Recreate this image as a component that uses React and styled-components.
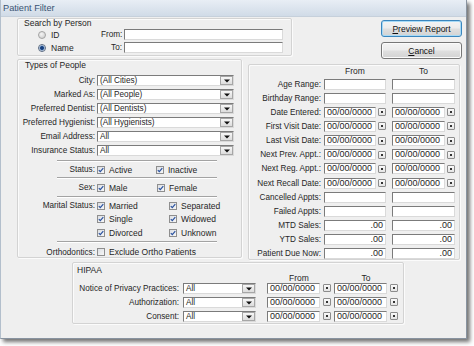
import React from "react";
import styled, { createGlobalStyle } from "styled-components";

const GlobalStyle = createGlobalStyle`
  html, body { margin: 0; padding: 0; background: #ffffff; }
  body {
    font-family: "Liberation Sans", Arial, sans-serif;
    font-size: 8.2px;
    color: #262626;
  }
  * { box-sizing: border-box; }
`;

const Stage = styled.div`
  width: 474px;
  height: 346px;
  overflow: hidden;
  background: #fff;
`;

const Window = styled.div`
  width: 467px;
  height: 339px;
  display: flex;
  flex-direction: column;
  background: #efefef;
  border-left: 1px solid #b3bfcc;
  border-right: 1px solid #8893a0;
  border-bottom: 1px solid #8893a0;
  box-shadow: 3px 3px 4px rgba(0, 0, 0, 0.55);
`;

const TitleBar = styled.div`
  height: 17px;
  flex-shrink: 0;
  display: flex;
  align-items: center;
  padding-left: 2px;
  font-size: 9.2px;
  color: #3a5373;
  background: linear-gradient(#e8eef5, #d0dbe7);
  border-bottom: 1px solid #c6d0db;
`;

const Body = styled.div`
  flex: 1;
  display: flex;
  flex-direction: column;
  align-items: flex-start;
  padding: 1px 0 0 16px;
`;

const Row = styled.div`
  display: flex;
  align-items: flex-start;
`;

const Group = styled.div`
  flex-shrink: 0;
  width: ${(p) => p.$w}px;
  height: ${(p) => p.$h}px;
  margin: ${(p) => p.$m || "0"};
  border: 1px solid #d3d3d3;
  border-radius: 2px;
  box-shadow: inset 1px 1px 0 #fbfbfb, 1px 1px 0 #fbfbfb;
`;

const GroupTitle = styled.div`
  line-height: ${(p) => p.$lh}px;
  height: ${(p) => p.$lh}px;
  margin-top: ${(p) => p.$mt || 0}px;
  padding-left: ${(p) => p.$pl}px;
  font-size: 8.5px;
  white-space: nowrap;
`;

const ButtonCol = styled.div`
  display: flex;
  flex-direction: column;
  gap: 5px;
  margin: 2px 0 0 89px;
`;

const Button = styled.button`
  width: 81px;
  height: 17px;
  padding: 0;
  font-family: inherit;
  font-size: 8.5px;
  color: #111;
  border: 1px solid ${(p) => (p.$default ? "#3a86be" : "#777")};
  border-radius: 3px;
  background: linear-gradient(#f4f4f4 0%, #ececec 48%, #dfdfdf 52%, #d3d3d3 100%);
  box-shadow: inset 0 0 0 1px ${(p) => (p.$default ? "#a7daf6" : "#fbfbfb")};
  u { text-decoration: underline; }
`;

const SearchGrid = styled.div`
  display: grid;
  grid-template-columns: 61px 21px 159px;
  column-gap: 2px;
  grid-auto-rows: 13px;
  align-items: center;
  padding-left: 20px;
`;

const RadioLabel = styled.label`
  display: flex;
  align-items: center;
  gap: 5px;
  white-space: nowrap;
  font-size: 8.5px;
`;

const Radio = styled.span`
  width: 8px;
  height: 8px;
  border-radius: 50%;
  border: 1px solid ${(p) => (p.$on ? "#5a6a80" : "#a3a3a3")};
  background: ${(p) =>
    p.$on
      ? "radial-gradient(circle, #17407f 0 1.5px, #6d94c8 2.1px, #e6edf5 3px)"
      : "radial-gradient(circle at 40% 35%, #f4f4f4, #c9c9c9)"};
`;

const FieldLabel = styled.span`
  text-align: right;
  white-space: nowrap;
  padding-right: ${(p) => p.$pr || 0}px;
`;

const TextBox = styled.div`
  width: ${(p) => p.$w}px;
  height: 11px;
  display: flex;
  align-items: center;
  justify-content: ${(p) => (p.$right ? "flex-end" : "flex-start")};
  padding: ${(p) => (p.$select ? "0 0 0 2px" : "0 2px")};
  font-size: ${(p) => (p.$digits ? "9px" : "inherit")};
  background: #fff;
  border-top: 1px solid #7b7b7b;
  border-left: 1px solid #7b7b7b;
  border-right: 1px solid #dadada;
  border-bottom: 1px solid #dadada;
  line-height: 9px;
  white-space: nowrap;
  overflow: hidden;
`;

const DropBtn = styled.span`
  margin-left: auto;
  width: 13px;
  height: 9px;
  flex-shrink: 0;
  display: flex;
  align-items: flex-end;
  justify-content: center;
  padding-bottom: 1px;
  border: 1px solid #a6a6a6;
  background: linear-gradient(#f7f7f7, #dcdcdc);
`;

const DateBtn = styled.span`
  width: 8px;
  height: 8px;
  margin-left: ${(p) => p.$gap}px;
  flex-shrink: 0;
  display: flex;
  align-items: center;
  justify-content: center;
  border: 1px solid #8c8c8c;
  border-radius: 1px;
  background: linear-gradient(#fafafa, #e4e4e4);
  &::after {
    content: "";
    width: 2px;
    height: 2px;
    background: #333;
  }
`;

const DateCell = styled.div`
  display: flex;
  align-items: center;
`;

const FormList = styled.div`
  margin-top: ${(p) => p.$mt || 0}px;
`;

const FormRow = styled.div`
  display: grid;
  grid-template-columns: 74px 137px;
  column-gap: 2px;
  align-items: center;
  height: 14px;
  padding-left: 3px;
`;

const Divider = styled.div`
  width: 160px;
  height: 2px;
  margin: ${(p) => p.$mt}px 0 0 39px;
  border-top: 1px solid #a3a3a3;
  border-bottom: 1px solid #ffffff;
`;

const CheckRow = styled.div`
  display: grid;
  grid-template-columns: 74px ${(p) => p.$first}px auto;
  column-gap: 2px;
  align-items: center;
  height: ${(p) => p.$h}px;
  margin-top: ${(p) => p.$mt || 0}px;
  padding-left: 3px;
`;

const CheckItem = styled.label`
  display: flex;
  align-items: center;
  gap: 4px;
  white-space: nowrap;
  font-size: 8.5px;
`;

const Box = styled.span`
  width: 8px;
  height: 8px;
  flex-shrink: 0;
  display: flex;
  align-items: center;
  justify-content: center;
  border: 1px solid #8e8e8e;
  background: linear-gradient(135deg, #dcdfe4, #f7f7f7);
`;

const MaritalBlock = styled.div`
  padding-top: 1px;
`;

const DatesGrid = styled.div`
  display: grid;
  grid-template-columns: 75px 68px 63px;
  grid-template-rows: 12px;
  grid-auto-rows: 14.15px;
  align-items: center;
`;

const HeadCell = styled.div`
  grid-column: ${(p) => p.$col};
  text-align: center;
  padding-right: ${(p) => p.$pr || 0}px;
  line-height: 8px;
  font-size: 8.5px;
`;

const HipaaGrid = styled.div`
  display: grid;
  grid-template-columns: 110px 84px 67px 64px;
  grid-template-rows: 7px;
  grid-auto-rows: 14px;
  align-items: center;
`;

const Arrow = () => (
  <svg width="6" height="4" viewBox="0 0 6 4">
    <path d="M0 0.5h6L3 3.5z" fill="#111" />
  </svg>
);

const Check = ({ on }) => (
  <Box>
    {on && (
      <svg width="6" height="6" viewBox="0 0 6 6">
        <path d="M0.8 3.1 L2.3 4.6 L5.3 1.2" stroke="#2a52a0" strokeWidth="1.2" fill="none" />
      </svg>
    )}
  </Box>
);

const Select = ({ w, value }) => (
  <TextBox $w={w} $select>
    {value}
    <DropBtn>
      <Arrow />
    </DropBtn>
  </TextBox>
);

const DateField = ({ w = 52, gap = 2 }) => (
  <DateCell>
    <TextBox $w={w} $digits>
      00/00/0000
    </TextBox>
    <DateBtn $gap={gap} />
  </DateCell>
);

const selectRows = [
  ["City:", "(All Cities)"],
  ["Marked As:", "(All People)"],
  ["Preferred Dentist:", "(All Dentists)"],
  ["Preferred Hygienist:", "(All Hygienists)"],
  ["Email Address:", "All"],
  ["Insurance Status:", "All"],
];

const dateRows = [
  ["Age Range:", "text"],
  ["Birthday Range:", "text"],
  ["Date Entered:", "date"],
  ["First Visit Date:", "date"],
  ["Last Visit Date:", "date"],
  ["Next Prev. Appt.:", "date"],
  ["Next Reg. Appt.:", "date"],
  ["Next Recall Date:", "date"],
  ["Cancelled Appts:", "text"],
  ["Failed Appts:", "text"],
  ["MTD Sales:", "money"],
  ["YTD Sales:", "money"],
  ["Patient Due Now:", "money"],
];

const hipaaRows = ["Notice of Privacy Practices:", "Authorization:", "Consent:"];

function RangeCell({ kind, w }) {
  if (kind === "date") return <DateField w={w - 10} />;
  if (kind === "money")
    return (
      <TextBox $w={w} $right $digits>
        .00
      </TextBox>
    );
  return <TextBox $w={w} />;
}

export default function App() {
  return (
    <Stage>
      <GlobalStyle />
      <Window>
        <TitleBar>Patient Filter</TitleBar>
        <Body>
          <Row>
            <Group $w={275} $h={38}>
              <GroupTitle $lh={9} $pl={6}>Search by Person</GroupTitle>
              <SearchGrid>
                <RadioLabel>
                  <Radio />
                  ID
                </RadioLabel>
                <FieldLabel>From:</FieldLabel>
                <TextBox $w={159} />
                <RadioLabel>
                  <Radio $on />
                  Name
                </RadioLabel>
                <FieldLabel>To:</FieldLabel>
                <TextBox $w={159} />
              </SearchGrid>
            </Group>
            <ButtonCol>
              <Button $default>
                <u>P</u>review Report
              </Button>
              <Button>
                <u>C</u>ancel
              </Button>
            </ButtonCol>
          </Row>

          <Row>
            <Group $w={225} $h={199}>
              <GroupTitle $lh={10} $pl={7}>Types of People</GroupTitle>
              <FormList $mt={3}>
                {selectRows.map(([label, value]) => (
                  <FormRow key={label}>
                    <FieldLabel>{label}</FieldLabel>
                    <Select w={137} value={value} />
                  </FormRow>
                ))}
              </FormList>
              <Divider $mt={3} />
              <CheckRow $first={57} $h={15}>
                <FieldLabel>Status:</FieldLabel>
                <CheckItem>
                  <Check on />
                  Active
                </CheckItem>
                <CheckItem>
                  <Check on />
                  Inactive
                </CheckItem>
              </CheckRow>
              <Divider $mt={0} />
              <CheckRow $first={58} $h={17}>
                <FieldLabel>Sex:</FieldLabel>
                <CheckItem>
                  <Check on />
                  Male
                </CheckItem>
                <CheckItem>
                  <Check on />
                  Female
                </CheckItem>
              </CheckRow>
              <Divider $mt={0} />
              <MaritalBlock>
                {[
                  ["Marital Status:", "Married", "Separated"],
                  ["", "Single", "Widowed"],
                  ["", "Divorced", "Unknown"],
                ].map(([label, a, b]) => (
                  <CheckRow key={a} $first={70} $h={13.5}>
                    <FieldLabel>{label}</FieldLabel>
                    <CheckItem>
                      <Check on />
                      {a}
                    </CheckItem>
                    <CheckItem>
                      <Check on />
                      {b}
                    </CheckItem>
                  </CheckRow>
                ))}
              </MaritalBlock>
              <Divider $mt={1.5} />
              <CheckRow $first={120} $h={14} $mt={2}>
                <FieldLabel>Orthodontics:</FieldLabel>
                <CheckItem>
                  <Check />
                  Exclude Ortho Patients
                </CheckItem>
              </CheckRow>
            </Group>

            <Group $w={212} $h={196} $m="5px 0 0 6px">
              <DatesGrid>
                <HeadCell $col={2} $pr={6}>From</HeadCell>
                <HeadCell $col={3}>To</HeadCell>
                {dateRows.map(([label, kind]) => (
                  <React.Fragment key={label}>
                    <FieldLabel $pr={3}>{label}</FieldLabel>
                    <RangeCell kind={kind} w={62} />
                    <RangeCell kind={kind} w={63} />
                  </React.Fragment>
                ))}
              </DatesGrid>
            </Group>
          </Row>

          <Group $w={332} $h={62} $m="2px 0 0 55px">
            <GroupTitle $lh={8} $mt={3} $pl={4}>HIPAA</GroupTitle>
            <HipaaGrid>
              <HeadCell $col={3} $pr={3}>From</HeadCell>
              <HeadCell $col={4}>To</HeadCell>
              {hipaaRows.map((label) => (
                <React.Fragment key={label}>
                  <FieldLabel $pr={4}>{label}</FieldLabel>
                  <Select w={73} value="All" />
                  <DateField w={53} gap={3} />
                  <DateField w={53} gap={3} />
                </React.Fragment>
              ))}
            </HipaaGrid>
          </Group>
        </Body>
      </Window>
    </Stage>
  );
}
